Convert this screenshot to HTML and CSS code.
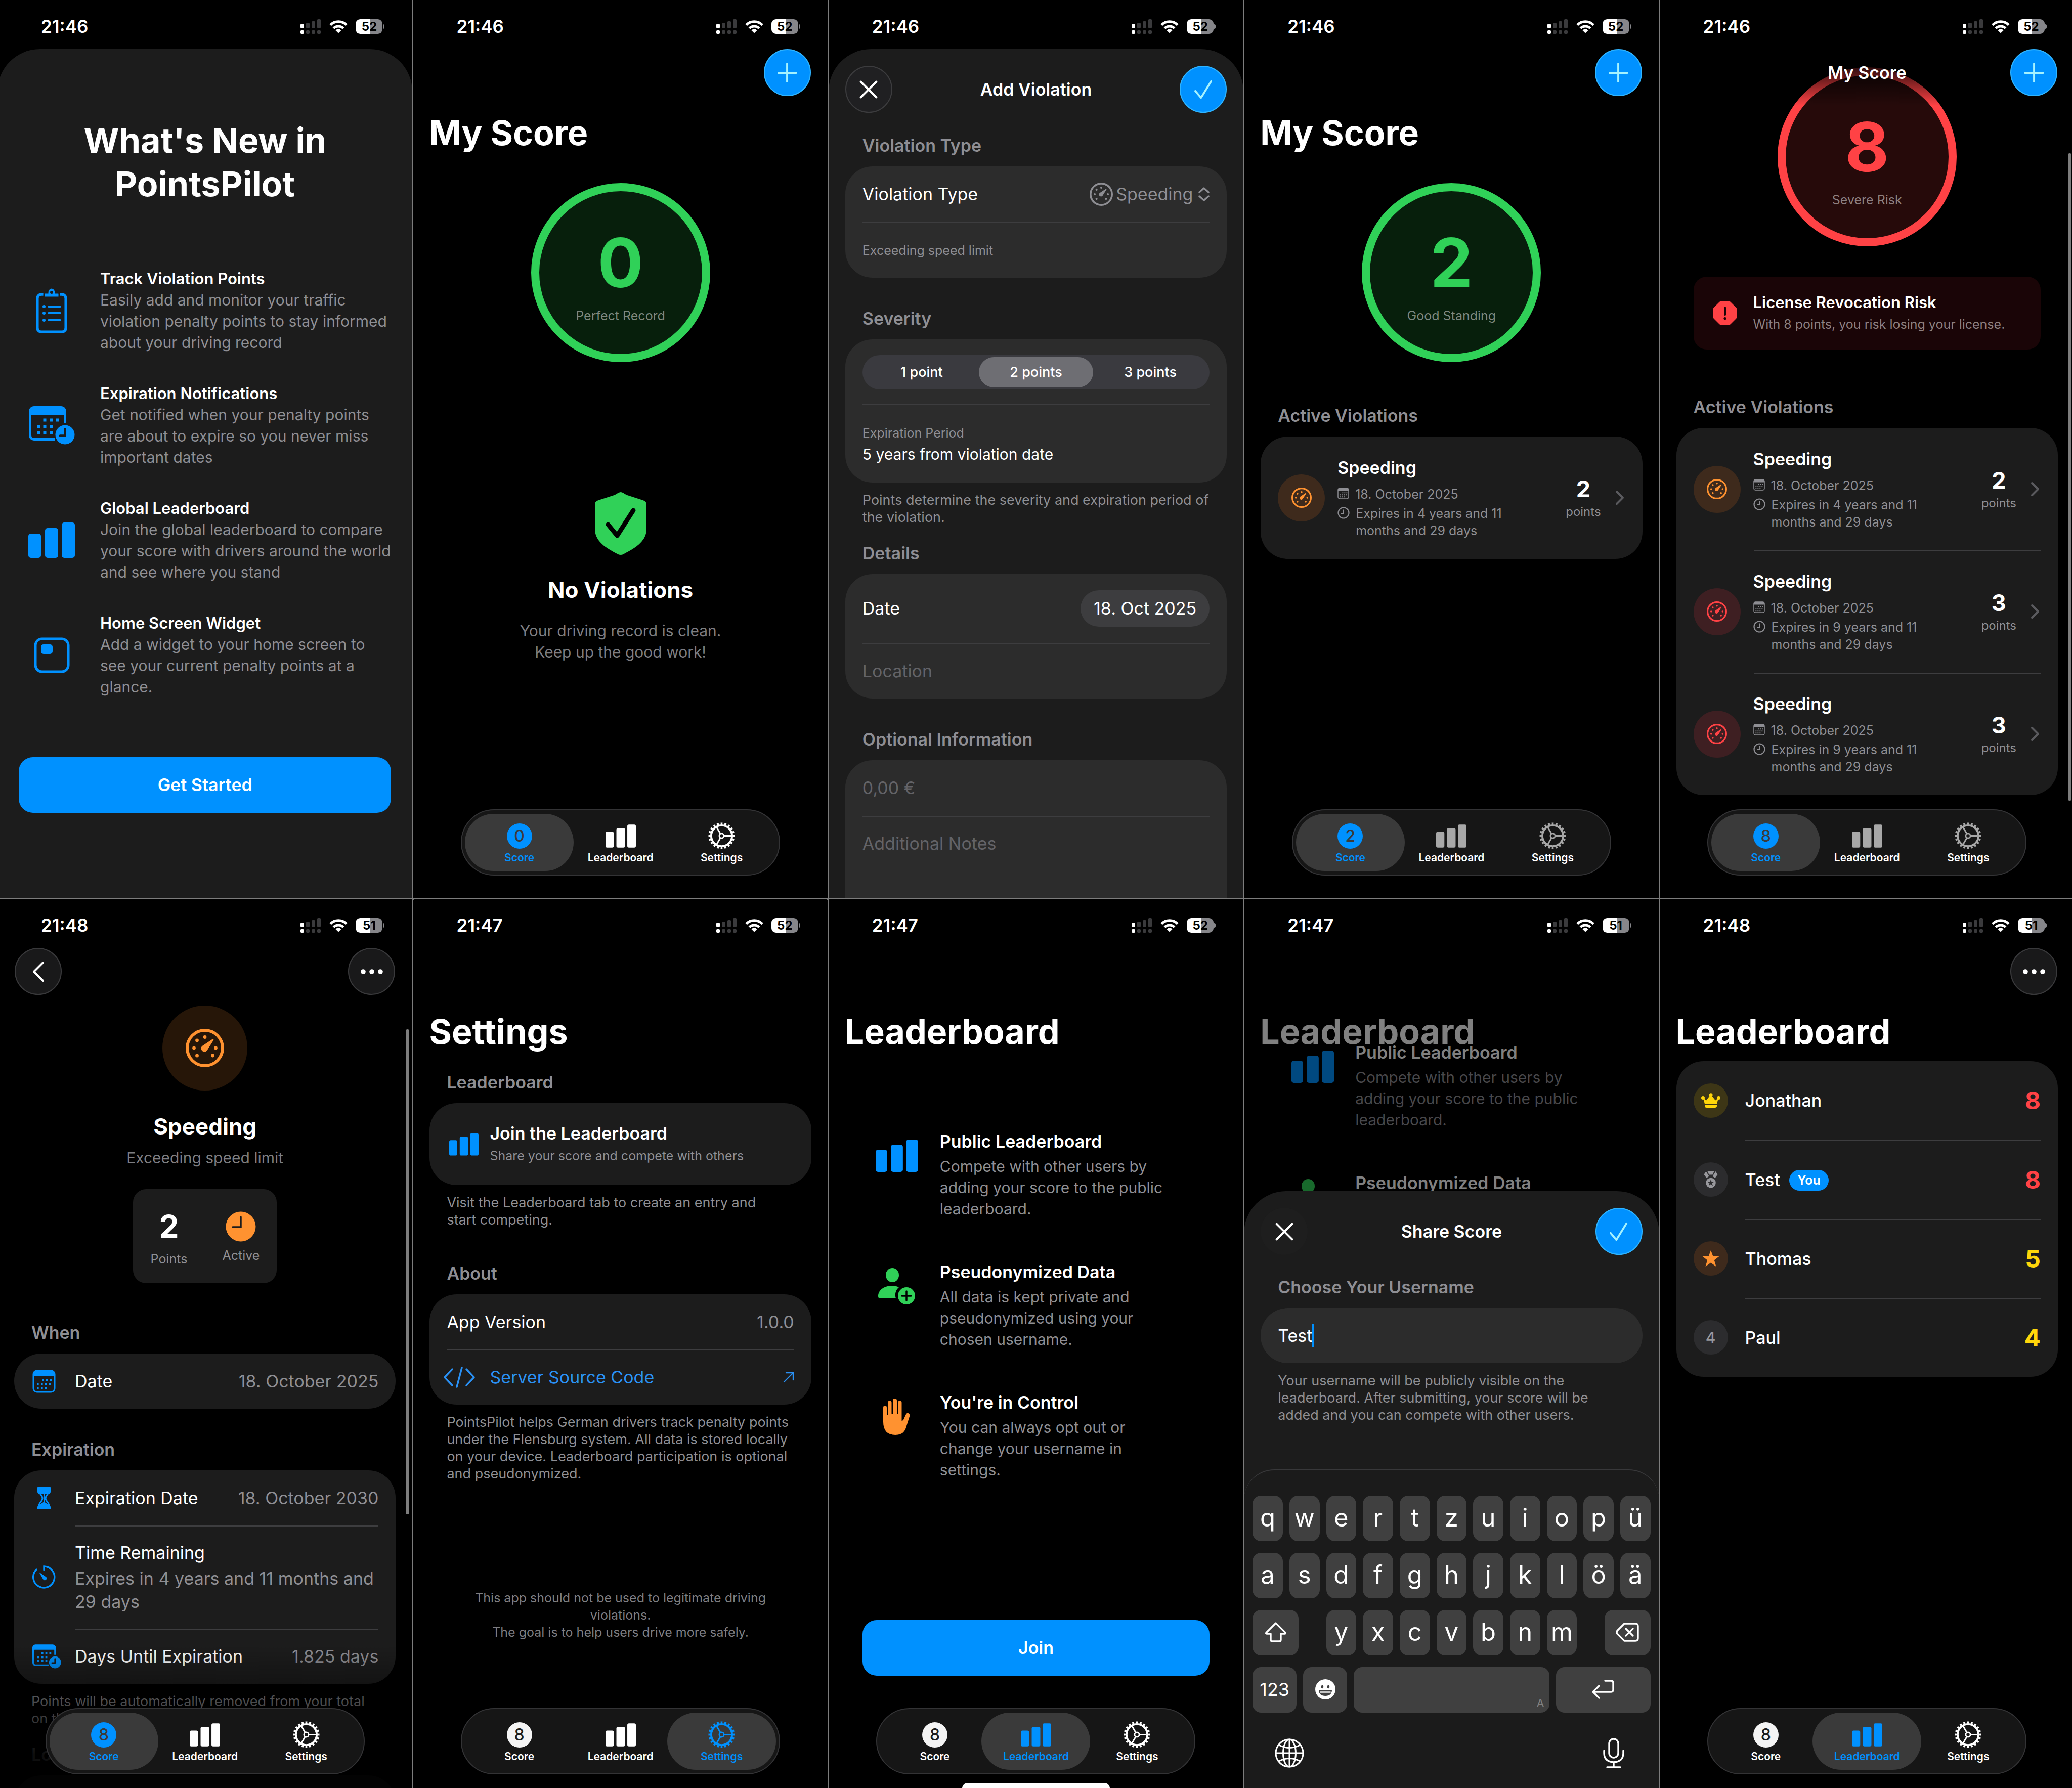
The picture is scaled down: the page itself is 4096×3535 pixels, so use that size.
FILE: index.html
```html
<!DOCTYPE html>
<html lang="en">
<head>
<meta charset="utf-8">
<title>PointsPilot screens</title>
<link rel="stylesheet" href="styles.css">
</head>
<body>
<svg class="sprite" aria-hidden="true">
  <symbol id="i-signal" viewBox="0 0 41 29">
    <g fill="#fff"><rect x="0" y="9" width="7" height="9" rx="2"/><rect x="0" y="22" width="7" height="7" rx="2"/></g>
    <g fill="#3a3a3c"><rect x="11" y="7" width="7" height="11" rx="2"/><rect x="22" y="4" width="7" height="14" rx="2"/><rect x="33" y="0" width="7" height="18" rx="2"/><rect x="11" y="22" width="7" height="7" rx="2"/><rect x="22" y="22" width="7" height="7" rx="2"/><rect x="33" y="22" width="7" height="7" rx="2"/></g>
  </symbol>
  <symbol id="i-wifi" viewBox="0 0 36 27">
    <g fill="none" stroke="#fff" stroke-width="5"><path d="M2 10.5a22.5 22.5 0 0 1 32 0"/><path d="M8.3 17a13.7 13.7 0 0 1 19.4 0"/></g>
    <path fill="#fff" d="M18 26.500l-5.600-5.600a8 8 0 0 1 11.200 0z"/>
  </symbol>
  <symbol id="i-bars" viewBox="0 0 92 70">
    <rect x="0" y="22" width="25" height="48" rx="5"/><rect x="33" y="11" width="26" height="59" rx="5"/><rect x="66" y="0" width="26" height="70" rx="5"/>
  </symbol>
  <symbol id="i-gear" viewBox="0 0 54 54">
    <g fill="none" stroke="currentColor"><circle cx="27" cy="27" r="21" stroke-width="4"/><circle cx="27" cy="27" r="24.500" stroke-width="4" pathLength="40" stroke-dasharray="1 1" stroke-dashoffset=".5"/><circle cx="27" cy="27" r="4.700" stroke-width="2.800"/><path stroke-width="3" d="M32 27h14M24.500 22.700L17 9.700M24.500 31.300L17 44.300"/></g>
  </symbol>
  <symbol id="i-gauge" viewBox="0 0 76 76">
    <circle cx="38" cy="38" r="35" fill="none" stroke="currentColor" stroke-width="6"/>
    <g fill="currentColor"><circle cx="38" cy="16.500" r="3.400"/><circle cx="22.500" cy="23" r="3.400"/><circle cx="16.500" cy="38" r="3.400"/><circle cx="59.500" cy="38" r="3.400"/><circle cx="22.500" cy="53" r="3.400"/><circle cx="53.500" cy="53" r="3.400"/><path d="M53 20.500c1.500-1 3 .5 2 2.200L42.500 42.500a6.500 6.500 0 1 1-9-9z"/></g>
  </symbol>
  <symbol id="i-plus" viewBox="0 0 40 40"><path d="M20 1v38M1 20h38" fill="none" stroke="currentColor" stroke-width="4" stroke-linecap="round"/></symbol>
  <symbol id="i-close" viewBox="0 0 40 40"><path d="M3 3l34 34M37 3L3 37" fill="none" stroke="currentColor" stroke-width="4.500" stroke-linecap="round"/></symbol>
  <symbol id="i-check" viewBox="0 0 40 40"><path d="M3 23l12 14L36 3" fill="none" stroke="currentColor" stroke-width="4" stroke-linecap="round" stroke-linejoin="round"/></symbol>
  <symbol id="i-back" viewBox="0 0 24 40"><path d="M21 2L3 20l18 18" fill="none" stroke="currentColor" stroke-width="4" stroke-linecap="round" stroke-linejoin="round"/></symbol>
  <symbol id="i-more" viewBox="0 0 44 10"><g fill="currentColor"><circle cx="5" cy="5" r="4.800"/><circle cx="22" cy="5" r="4.800"/><circle cx="39" cy="5" r="4.800"/></g></symbol>
  <symbol id="i-chevron" viewBox="0 0 18 30"><path d="M3 3l12 12L3 27" fill="none" stroke="currentColor" stroke-width="4" stroke-linecap="round" stroke-linejoin="round"/></symbol>
  <symbol id="i-updown" viewBox="0 0 22 28"><path d="M2 10l9-8 9 8M2 18l9 8 9-8" fill="none" stroke="currentColor" stroke-width="3.500" stroke-linecap="round" stroke-linejoin="round"/></symbol>
  <symbol id="i-clipboard" viewBox="0 0 62 90">
    <rect x="2.800" y="13" width="56.400" height="74.200" rx="8" fill="none" stroke="currentColor" stroke-width="5.500"/>
    <path fill="currentColor" stroke="#1c1c1c" stroke-width="3" d="M18 10h5c0-5 3-10 8-10s8 5 8 10h5a2 2 0 0 1 2 2v7H16v-7a2 2 0 0 1 2-2z"/><circle cx="31" cy="9" r="3" fill="#1c1c1c"/>
    <g fill="currentColor"><circle cx="16" cy="37" r="3"/><circle cx="16" cy="50" r="3"/><circle cx="16" cy="64" r="3"/></g>
    <path d="M25 37h23M25 50h23M25 64h23" stroke="currentColor" stroke-width="4" stroke-linecap="round"/>
  </symbol>
  <symbol id="i-calendar" viewBox="0 0 46 46">
    <rect x="2" y="2" width="42" height="42" rx="7" fill="none" stroke="currentColor" stroke-width="3"/><path fill="currentColor" d="M2 13V8a6 6 0 0 1 6-6h30a6 6 0 0 1 6 6v5z"/>
    <path d="M19 20.500h20M9 28.500h30M9 36.500h20" stroke="currentColor" stroke-width="3.600" stroke-dasharray="3.600 4.400"/>
  </symbol>
  <symbol id="i-calclock" viewBox="0 0 91 76">
    <path fill="none" stroke="currentColor" stroke-width="5" d="M71.500 33V10a7.500 7.500 0 0 0-7.500-7.500H10A7.500 7.500 0 0 0 2.500 10v48a7.500 7.500 0 0 0 7.500 7.500h41"/><path fill="currentColor" d="M2 21V10a8 8 0 0 1 8-8h54a8 8 0 0 1 8 8v11q0-4-4-4H8q-6 0-6 4z"/>
    <g stroke="currentColor" stroke-width="6" stroke-dasharray="6 6.500"><path d="M28.500 27.500h31.500M16 40h31M16 52h31"/></g>
    <circle cx="71.500" cy="56.500" r="19" fill="currentColor"/><path d="M71.500 45.500v13H62" fill="none" stroke="#1c1c1c" stroke-width="4.500" stroke-linecap="round" stroke-linejoin="round"/>
  </symbol>
  <symbol id="i-widget" viewBox="0 0 71 71"><rect x="3" y="3" width="65" height="65" rx="13" fill="none" stroke="currentColor" stroke-width="5"/><rect x="14" y="14" width="23" height="19" rx="5" fill="currentColor"/></symbol>
  <symbol id="i-clock" viewBox="0 0 24 24"><circle cx="12" cy="12" r="10.500" fill="none" stroke="currentColor" stroke-width="2.200"/><path d="M12 5.500V13H7" fill="none" stroke="currentColor" stroke-width="2"/></symbol>
  <symbol id="i-clockfill" viewBox="0 0 60 60"><circle cx="30" cy="30" r="29.500" fill="currentColor"/><path d="M30 11v20H14" fill="none" stroke="#1c1c1c" stroke-width="3.500" stroke-linecap="round"/></symbol>
  <symbol id="i-shield" viewBox="0 0 102 124"><path fill="currentColor" d="M51 0c4 0 8 4 13 6l31 10c5 2 7 4 7 9v48c0 28-30 41-46 50q-5 2-10 0C30 114 0 101 0 73V25c0-5 2-7 7-9l31-10c5-2 9-6 13-6z"/><path d="M26 64l18 22 32-50" fill="none" stroke="#000" stroke-width="9" stroke-linecap="round" stroke-linejoin="round"/></symbol>
  <symbol id="i-alert" viewBox="0 0 48 48"><path fill="currentColor" d="M17 0h14q2 0 4 2l11 11q2 2 2 4v14q0 2-2 4L35 46q-2 2-4 2H17q-2 0-4-2L2 35q-2-2-2-4V17q0-2 2-4L13 2q2-2 4-2z"/><path d="M24 13v14" stroke="#1a0507" stroke-width="4" stroke-linecap="round"/><circle cx="24" cy="34.500" r="2.600" fill="#1a0507"/></symbol>
  <symbol id="i-hourglass" viewBox="0 0 30 44"><path fill="none" stroke="currentColor" stroke-width="3" d="M4 3c0 11 8 12 8 19S4 30 4 41M26 3c0 11-8 12-8 19s8 8 8 19"/><path fill="currentColor" d="M1 2q0-2 2-2h24q2 0 2 2v3q0 6-4 9H5Q1 11 1 5zM1 42q0 2 2 2h24q2 0 2-2-1-5-5-7l-9-6-9 6q-4 2-5 7zM14 14h2v16h-2z"/></symbol>
  <symbol id="i-timer" viewBox="0 0 46 48"><path fill="none" stroke="currentColor" stroke-width="3.400" stroke-linecap="round" d="M23 10V3a21 21 0 1 1-15 6"/><path fill="currentColor" d="M13 14l13 9a3.800 3.800 0 1 1-5 5z"/></symbol>
  <symbol id="i-code" viewBox="0 0 62 42"><path fill="none" stroke="currentColor" stroke-width="3.500" stroke-linecap="round" stroke-linejoin="round" d="M17 5L2 21l15 16M45 5l15 16-15 16M36 2L26 40"/></symbol>
  <symbol id="i-arrow" viewBox="0 0 22 22"><path fill="none" stroke="currentColor" stroke-width="2.400" stroke-linecap="round" stroke-linejoin="round" d="M2 20L20 2M6 2h14v14"/></symbol>
  <symbol id="i-person" viewBox="0 0 74 72"><g fill="currentColor"><ellipse cx="28" cy="14" rx="13" ry="14"/><path d="M0 56c0-13 12-21 28-21 5 0 9 1 13 3a20 20 0 0 0-6 22H4q-4 0-4-4z"/><circle cx="56" cy="55" r="17"/></g><path d="M56 46v18M47 55h18" stroke="#000" stroke-width="3.500" stroke-linecap="round"/></symbol>
  <symbol id="i-hand" viewBox="0 0 54 72"><path fill="currentColor" d="M0 18q0-4 3.500-4T7 18v15h2.500V8q0-4 3.500-4t3.500 4v23H19V4q0-4 4-4t4 4v27h2.500V8q0-4 3.500-4t3.500 4v36l3-1 5-11q2-4 5-3t3 5l-8 25Q40 72 24 72 0 72 0 46z"/></symbol>
  <symbol id="i-crown" viewBox="0 0 38 30"><g fill="currentColor"><path d="M4 10l6 4.500 7-9h4l7 9 6-4.500-3 11.500H7z"/><circle cx="3.500" cy="9.500" r="3.500"/><circle cx="19" cy="3.800" r="3.600"/><circle cx="34.500" cy="9.500" r="3.500"/><path d="M7 23.500h24v2q0 3.500-4 3.500H11q-4 0-4-3.500z"/></g></symbol>
  <symbol id="i-medal" viewBox="0 0 28 34"><g fill="currentColor"><path d="M7 0h14l-3.500 7.500h-7zM4.500 1L.5 7l5 7 5-3.500zM23.500 1l4 6-5 7-5-3.500z"/><circle cx="14" cy="23.500" r="9.800"/></g><path fill="#2c2c2e" d="M14 17l1.600 4.600h4.800l-3.900 2.900 1.500 4.700-4-2.900-4 2.900 1.500-4.700-3.900-2.900h4.800z"/></symbol>
  <symbol id="i-star" viewBox="0 0 34 32"><path fill="currentColor" d="M17 0l4.300 11.500H34l-10.200 8L27.500 32 17 24.500 6.500 32l3.700-12.500L0 11.500h12.700z"/></symbol>
  <symbol id="i-shift" viewBox="0 0 44 40"><path fill="none" stroke="currentColor" stroke-width="3.400" stroke-linejoin="round" d="M22 2L3 21q-1 2 1 2h8v12q0 3 3 3h14q3 0 3-3V23h8q2 0 1-2z"/></symbol>
  <symbol id="i-delete" viewBox="0 0 46 38"><g fill="none" stroke="currentColor" stroke-width="3.400" stroke-linecap="round" stroke-linejoin="round"><path d="M17 2h22q5 0 5 5v24q0 5-5 5H17L3 22q-2-3 0-6z"/><path d="M20 12l14 14M34 12L20 26"/></g></symbol>
  <symbol id="i-return" viewBox="0 0 44 38"><path fill="none" stroke="currentColor" stroke-width="3.400" stroke-linecap="round" stroke-linejoin="round" d="M26 2h12q4 0 4 4v14q0 4-4 4H3M14 12L2 24l12 12"/></symbol>
  <symbol id="i-emoji" viewBox="0 0 40 40"><circle cx="20" cy="20" r="20" fill="currentColor"/><g fill="#404040"><ellipse cx="14" cy="15" rx="2.200" ry="3.200"/><ellipse cx="26" cy="15" rx="2.200" ry="3.200"/><path d="M7 22h26q-1 11-13 11T7 22z"/></g><path d="M9.500 25.500h21" stroke="#fff" stroke-width="2.400"/></symbol>
  <symbol id="i-globe" viewBox="0 0 58 58"><g fill="none" stroke="currentColor" stroke-width="3"><circle cx="29" cy="29" r="27"/><ellipse cx="29" cy="29" rx="12.500" ry="27"/><path d="M29 2v54M2 29h54M8 13q21 11 42 0M8 45q21-11 42 0"/></g></symbol>
  <symbol id="i-mic" viewBox="0 0 42 60"><g fill="none" stroke="currentColor" stroke-width="3.400" stroke-linecap="round"><rect x="12" y="2" width="18" height="37" rx="9"/><path d="M2 25v5q0 17 19 18 19-1 19-18v-5M21 48v9M8 58h26"/></g></symbol>
</svg>

<main class="board">

  <!-- 1: What's new -->
  <section class="phone">
    <header class="status"><time>21:46</time><span class="status-icons"><svg class="signal"><use href="#i-signal"/></svg><svg class="wifi"><use href="#i-wifi"/></svg><span class="battery">52</span></span></header>
    <div class="sheet welcome">
      <h1>What's New in<br>PointsPilot</h1>
      <ul class="news">
        <li><span class="news-icon"><svg width="62" height="90"><use href="#i-clipboard"/></svg></span><div><h2>Track Violation Points</h2><p>Easily add and monitor your traffic<br>violation penalty points to stay informed<br>about your driving record</p></div></li>
        <li><span class="news-icon"><svg width="91" height="76"><use href="#i-calclock"/></svg></span><div><h2>Expiration Notifications</h2><p>Get notified when your penalty points<br>are about to expire so you never miss<br>important dates</p></div></li>
        <li><span class="news-icon"><svg width="92" height="70"><use href="#i-bars"/></svg></span><div><h2>Global Leaderboard</h2><p>Join the global leaderboard to compare<br>your score with drivers around the world<br>and see where you stand</p></div></li>
        <li><span class="news-icon"><svg width="71" height="71"><use href="#i-widget"/></svg></span><div><h2>Home Screen Widget</h2><p>Add a widget to your home screen to<br>see your current penalty points at a<br>glance.</p></div></li>
      </ul>
      <button class="primary">Get Started</button>
    </div>
  </section>

  <!-- 2: Empty score -->
  <section class="phone">
    <header class="status"><time>21:46</time><span class="status-icons"><svg class="signal"><use href="#i-signal"/></svg><svg class="wifi"><use href="#i-wifi"/></svg><span class="battery">52</span></span></header>
    <div class="toolbar"><span></span><button class="round blue" aria-label="Add"><svg width="38" height="38"><use href="#i-plus"/></svg></button></div>
    <h1 class="page-title">My Score</h1>
    <div class="ring"><strong>0</strong><span>Perfect Record</span></div>
    <div class="empty">
      <svg width="102" height="124"><use href="#i-shield"/></svg>
      <h2>No Violations</h2>
      <p>Your driving record is clean.<br>Keep up the good work!</p>
    </div>
    <nav class="tabs">
      <a href="#score" class="on"><span class="badge">0</span>Score</a>
      <a href="#leaderboard"><svg width="60" height="46"><use href="#i-bars"/></svg>Leaderboard</a>
      <a href="#settings"><svg width="53" height="53"><use href="#i-gear"/></svg>Settings</a>
    </nav>
  </section>

  <!-- 3: Add violation -->
  <section class="phone">
    <header class="status"><time>21:46</time><span class="status-icons"><svg class="signal"><use href="#i-signal"/></svg><svg class="wifi"><use href="#i-wifi"/></svg><span class="battery">52</span></span></header>
    <form class="sheet form">
      <div class="sheet-bar"><button type="button" class="round" aria-label="Close"><svg width="36" height="36"><use href="#i-close"/></svg></button><h2>Add Violation</h2><button type="button" class="round blue" aria-label="Save"><svg width="38" height="38"><use href="#i-check"/></svg></button></div>
      <section class="group">
        <h3>Violation Type</h3>
        <div class="card">
          <div class="row"><label for="type">Violation Type</label><span class="picker"><svg width="46" height="46"><use href="#i-gauge"/></svg><select id="type"><option>Speeding</option></select><svg width="22" height="28"><use href="#i-updown"/></svg></span></div>
          <div class="row small">Exceeding speed limit</div>
        </div>
      </section>
      <section class="group">
        <h3>Severity</h3>
        <div class="card">
          <div class="segment-row"><div class="segment">
            <label><input type="radio" name="points">1 point</label>
            <label><input type="radio" name="points" checked>2 points</label>
            <label><input type="radio" name="points">3 points</label>
          </div></div>
          <div class="period"><span>Expiration Period</span><p>5 years from violation date</p></div>
        </div>
        <p class="note">Points determine the severity and expiration period of<br>the violation.</p>
      </section>
      <section class="group tight">
        <h3>Details</h3>
        <div class="card">
          <div class="row tall"><span>Date</span><button type="button" class="date">18. Oct 2025</button></div>
          <div class="row"><input aria-label="Location" placeholder="Location"></div>
        </div>
      </section>
      <section class="group">
        <h3>Optional Information</h3>
        <div class="card">
          <div class="row"><input aria-label="Fine" placeholder="0,00 €"></div>
          <div class="row notes"><textarea aria-label="Additional Notes" placeholder="Additional Notes"></textarea></div>
        </div>
      </section>
    </form>
  </section>

  <!-- 4: One violation -->
  <section class="phone">
    <header class="status"><time>21:46</time><span class="status-icons"><svg class="signal"><use href="#i-signal"/></svg><svg class="wifi"><use href="#i-wifi"/></svg><span class="battery">52</span></span></header>
    <div class="toolbar"><span></span><button class="round blue" aria-label="Add"><svg width="38" height="38"><use href="#i-plus"/></svg></button></div>
    <h1 class="page-title">My Score</h1>
    <div class="ring"><strong>2</strong><span>Good Standing</span></div>
    <section class="group violations">
      <h3>Active Violations</h3>
      <div class="card">
        <a href="#v1" class="violation"><span class="dot orange"><svg width="40" height="40"><use href="#i-gauge"/></svg></span><div class="violation-body"><h4>Speeding</h4><p><svg width="23" height="23"><use href="#i-calendar"/></svg>18. October 2025</p><p><svg width="24" height="24"><use href="#i-clock"/></svg>Expires in 4 years and 11<br>months and 29 days</p></div><div class="count"><strong>2</strong>points</div><svg class="chevron"><use href="#i-chevron"/></svg></a>
      </div>
    </section>
    <nav class="tabs dim">
      <a href="#score" class="on"><span class="badge">2</span>Score</a>
      <a href="#leaderboard"><svg width="60" height="46"><use href="#i-bars"/></svg>Leaderboard</a>
      <a href="#settings"><svg width="53" height="53"><use href="#i-gear"/></svg>Settings</a>
    </nav>
  </section>

  <!-- 5: Severe risk -->
  <section class="phone">
    <header class="status"><time>21:46</time><span class="status-icons"><svg class="signal"><use href="#i-signal"/></svg><svg class="wifi"><use href="#i-wifi"/></svg><span class="battery">52</span></span></header>
    <div class="toolbar over"><h2>My Score</h2><button class="round blue" aria-label="Add"><svg width="38" height="38"><use href="#i-plus"/></svg></button></div>
    <div class="ring red"><strong>8</strong><span>Severe Risk</span></div>
    <div class="alert"><svg width="48" height="48"><use href="#i-alert"/></svg><div><h3>License Revocation Risk</h3><p>With 8 points, you risk losing your license.</p></div></div>
    <section class="group after-alert">
      <h3>Active Violations</h3>
      <div class="card">
        <a href="#v1" class="violation"><span class="dot orange"><svg width="40" height="40"><use href="#i-gauge"/></svg></span><div class="violation-body"><h4>Speeding</h4><p><svg width="23" height="23"><use href="#i-calendar"/></svg>18. October 2025</p><p><svg width="24" height="24"><use href="#i-clock"/></svg>Expires in 4 years and 11<br>months and 29 days</p></div><div class="count"><strong>2</strong>points</div><svg class="chevron"><use href="#i-chevron"/></svg></a>
        <a href="#v2" class="violation"><span class="dot red"><svg width="40" height="40"><use href="#i-gauge"/></svg></span><div class="violation-body"><h4>Speeding</h4><p><svg width="23" height="23"><use href="#i-calendar"/></svg>18. October 2025</p><p><svg width="24" height="24"><use href="#i-clock"/></svg>Expires in 9 years and 11<br>months and 29 days</p></div><div class="count"><strong>3</strong>points</div><svg class="chevron"><use href="#i-chevron"/></svg></a>
        <a href="#v3" class="violation"><span class="dot red"><svg width="40" height="40"><use href="#i-gauge"/></svg></span><div class="violation-body"><h4>Speeding</h4><p><svg width="23" height="23"><use href="#i-calendar"/></svg>18. October 2025</p><p><svg width="24" height="24"><use href="#i-clock"/></svg>Expires in 9 years and 11<br>months and 29 days</p></div><div class="count"><strong>3</strong>points</div><svg class="chevron"><use href="#i-chevron"/></svg></a>
      </div>
    </section>
    <i class="scrollbar long"></i>
    <nav class="tabs dim">
      <a href="#score" class="on"><span class="badge">8</span>Score</a>
      <a href="#leaderboard"><svg width="60" height="46"><use href="#i-bars"/></svg>Leaderboard</a>
      <a href="#settings"><svg width="53" height="53"><use href="#i-gear"/></svg>Settings</a>
    </nav>
  </section>

  <!-- 6: Violation detail -->
  <section class="phone">
    <header class="status"><time>21:48</time><span class="status-icons"><svg class="signal"><use href="#i-signal"/></svg><svg class="wifi"><use href="#i-wifi"/></svg><span class="battery">51</span></span></header>
    <div class="toolbar"><button class="round" aria-label="Back"><svg width="24" height="40"><use href="#i-back"/></svg></button><button class="round" aria-label="More"><svg width="44" height="10"><use href="#i-more"/></svg></button></div>
    <div class="hero">
      <span class="hero-icon"><svg width="76" height="76"><use href="#i-gauge"/></svg></span>
      <h2>Speeding</h2>
      <p>Exceeding speed limit</p>
      <div class="facts"><div><strong>2</strong>Points</div><div class="active"><svg width="60" height="60"><use href="#i-clockfill"/></svg>Active</div></div>
    </div>
    <section class="group when">
      <h3>When</h3>
      <div class="card"><div class="row icon-row single"><svg width="46" height="46"><use href="#i-calendar"/></svg><span>Date</span><span class="value">18. October 2025</span></div></div>
    </section>
    <section class="group">
      <h3>Expiration</h3>
      <div class="card">
        <div class="row icon-row"><svg width="46" height="44"><use href="#i-hourglass"/></svg><span>Expiration Date</span><span class="value">18. October 2030</span></div>
        <div class="row icon-row remaining"><svg width="46" height="48"><use href="#i-timer"/></svg><div>Time Remaining<p>Expires in 4 years and 11 months and<br>29 days</p></div></div>
        <div class="row icon-row until"><svg width="57" height="48"><use href="#i-calclock"/></svg><span>Days Until Expiration</span><span class="value">1.825 days</span></div>
      </div>
      <p class="note">Points will be automatically removed from your total<br>on this date.</p>
    </section>
    <section class="group tight"><h3>Location</h3><div class="card"><div class="row single"></div></div></section>
    <div class="fade"></div>
    <i class="scrollbar short"></i>
    <nav class="tabs">
      <a href="#score" class="on"><span class="badge">8</span>Score</a>
      <a href="#leaderboard"><svg width="60" height="46"><use href="#i-bars"/></svg>Leaderboard</a>
      <a href="#settings"><svg width="53" height="53"><use href="#i-gear"/></svg>Settings</a>
    </nav>
  </section>

  <!-- 7: Settings -->
  <section class="phone rounded">
    <header class="status"><time>21:47</time><span class="status-icons"><svg class="signal"><use href="#i-signal"/></svg><svg class="wifi"><use href="#i-wifi"/></svg><span class="battery">52</span></span></header>
    <div class="toolbar"></div>
    <h1 class="page-title">Settings</h1>
    <section class="group first">
      <h3>Leaderboard</h3>
      <div class="card"><div class="row icon-row join"><svg width="58" height="45"><use href="#i-bars"/></svg><div><h4>Join the Leaderboard</h4><p>Share your score and compete with others</p></div></div></div>
      <p class="note">Visit the Leaderboard tab to create an entry and<br>start competing.</p>
    </section>
    <section class="group about">
      <h3>About</h3>
      <div class="card">
        <div class="row"><span>App Version</span><span class="value">1.0.0</span></div>
        <a href="#source" class="row icon-row source"><svg width="62" height="42"><use href="#i-code"/></svg><span>Server Source Code</span><svg width="22" height="22"><use href="#i-arrow"/></svg></a>
      </div>
      <p class="note">PointsPilot helps German drivers track penalty points<br>under the Flensburg system. All data is stored locally<br>on your device. Leaderboard participation is optional<br>and pseudonymized.</p>
    </section>
    <p class="disclaimer">This app should not be used to legitimate driving<br>violations.<br>The goal is to help users drive more safely.</p>
    <nav class="tabs">
      <a href="#score"><span class="badge">8</span>Score</a>
      <a href="#leaderboard"><svg width="60" height="46"><use href="#i-bars"/></svg>Leaderboard</a>
      <a href="#settings" class="on"><svg width="53" height="53"><use href="#i-gear"/></svg>Settings</a>
    </nav>
  </section>

  <!-- 8: Leaderboard intro -->
  <section class="phone">
    <header class="status"><time>21:47</time><span class="status-icons"><svg class="signal"><use href="#i-signal"/></svg><svg class="wifi"><use href="#i-wifi"/></svg><span class="battery">52</span></span></header>
    <div class="toolbar"></div>
    <h1 class="page-title">Leaderboard</h1>
    <ul class="intro">
      <li><span><svg class="c-blue" width="84" height="64"><use href="#i-bars"/></svg></span><div><h2>Public Leaderboard</h2><p>Compete with other users by<br>adding your score to the public<br>leaderboard.</p></div></li>
      <li><span><svg class="c-green" width="74" height="72"><use href="#i-person"/></svg></span><div><h2>Pseudonymized Data</h2><p>All data is kept private and<br>pseudonymized using your<br>chosen username.</p></div></li>
      <li><span><svg class="c-orange" width="54" height="72"><use href="#i-hand"/></svg></span><div><h2>You're in Control</h2><p>You can always opt out or<br>change your username in<br>settings.</p></div></li>
    </ul>
    <button class="primary inset">Join</button>
    <nav class="tabs">
      <a href="#score"><span class="badge">8</span>Score</a>
      <a href="#leaderboard" class="on"><svg width="60" height="46"><use href="#i-bars"/></svg>Leaderboard</a>
      <a href="#settings"><svg width="53" height="53"><use href="#i-gear"/></svg>Settings</a>
    </nav>
    <i class="home"></i>
  </section>

  <!-- 9: Share score -->
  <section class="phone">
    <header class="status"><time>21:47</time><span class="status-icons"><svg class="signal"><use href="#i-signal"/></svg><svg class="wifi"><use href="#i-wifi"/></svg><span class="battery">51</span></span></header>
    <div class="behind">
      <div class="toolbar"></div>
      <h1 class="page-title">Leaderboard</h1>
      <ul class="intro">
        <li><span><svg class="c-blue" width="84" height="64"><use href="#i-bars"/></svg></span><div><h2>Public Leaderboard</h2><p>Compete with other users by<br>adding your score to the public<br>leaderboard.</p></div></li>
        <li><span><svg class="c-green" width="74" height="72"><use href="#i-person"/></svg></span><div><h2>Pseudonymized Data</h2></div></li>
      </ul>
    </div>
    <form class="sheet share">
      <div class="sheet-bar"><button type="button" class="round plain" aria-label="Close"><svg width="36" height="36"><use href="#i-close"/></svg></button><h2>Share Score</h2><button type="button" class="round blue" aria-label="Save"><svg width="38" height="38"><use href="#i-check"/></svg></button></div>
      <section class="group">
        <h3><label for="username">Choose Your Username</label></h3>
        <div class="card"><div class="row single username"><input id="username" value="Test"><i class="caret"></i></div></div>
        <p class="note">Your username will be publicly visible on the<br>leaderboard. After submitting, your score will be<br>added and you can compete with other users.</p>
      </section>
      <div class="keyboard">
        <div class="keys"><button type="button">q</button><button type="button">w</button><button type="button">e</button><button type="button">r</button><button type="button">t</button><button type="button">z</button><button type="button">u</button><button type="button">i</button><button type="button">o</button><button type="button">p</button><button type="button">ü</button></div>
        <div class="keys"><button type="button">a</button><button type="button">s</button><button type="button">d</button><button type="button">f</button><button type="button">g</button><button type="button">h</button><button type="button">j</button><button type="button">k</button><button type="button">l</button><button type="button">ö</button><button type="button">ä</button></div>
        <div class="keys"><button type="button" class="wide left" aria-label="Shift"><svg width="44" height="40"><use href="#i-shift"/></svg></button><button type="button">y</button><button type="button">x</button><button type="button">c</button><button type="button">v</button><button type="button">b</button><button type="button">n</button><button type="button">m</button><button type="button" class="wide right" aria-label="Delete"><svg width="46" height="38"><use href="#i-delete"/></svg></button></div>
        <div class="keys bottom"><button type="button" class="num">123</button><button type="button" aria-label="Emoji"><svg width="40" height="40"><use href="#i-emoji"/></svg></button><button type="button" class="space" aria-label="Space">A</button><button type="button" aria-label="Return"><svg width="44" height="38"><use href="#i-return"/></svg></button></div>
        <div class="key-foot"><svg width="58" height="58"><use href="#i-globe"/></svg><svg width="42" height="60"><use href="#i-mic"/></svg></div>
      </div>
    </form>
  </section>

  <!-- 10: Leaderboard -->
  <section class="phone">
    <header class="status"><time>21:48</time><span class="status-icons"><svg class="signal"><use href="#i-signal"/></svg><svg class="wifi"><use href="#i-wifi"/></svg><span class="battery">51</span></span></header>
    <div class="toolbar"><span></span><button class="round" aria-label="More"><svg width="44" height="10"><use href="#i-more"/></svg></button></div>
    <h1 class="page-title">Leaderboard</h1>
    <ol class="card ranks">
      <li><span class="dot gold"><svg width="38" height="30"><use href="#i-crown"/></svg></span><div>Jonathan<strong class="bad">8</strong></div></li>
      <li><span class="dot silver"><svg width="28" height="34"><use href="#i-medal"/></svg></span><div>Test<em>You</em><strong class="bad">8</strong></div></li>
      <li><span class="dot orange"><svg width="34" height="32"><use href="#i-star"/></svg></span><div>Thomas<strong>5</strong></div></li>
      <li><span class="dot silver">4</span><div>Paul<strong>4</strong></div></li>
    </ol>
    <nav class="tabs">
      <a href="#score"><span class="badge">8</span>Score</a>
      <a href="#leaderboard" class="on"><svg width="60" height="46"><use href="#i-bars"/></svg>Leaderboard</a>
      <a href="#settings"><svg width="53" height="53"><use href="#i-gear"/></svg>Settings</a>
    </nav>
  </section>
</main>
</body>
</html>
```
FILE: styles.css
```css
:root {
  --blue: #0091ff;
  --green: #30d158;
  --orange: #ff9230;
  --red: #ff4245;
  --yellow: #ffd60a;
  --gray: #8e8e93;
  --surface: #1c1c1c;
  --raised: #2c2c2c;
  --line: #3d3d3f;
  --card: var(--surface);
}

* { box-sizing: border-box; }

body {
  margin: 0;
  overflow: hidden;
  background: #000;
  color: #fff;
  font: 400 34px/46px Inter, "Liberation Sans", sans-serif;
}

h1, h2, h3, h4, p, ul, ol { margin: 0; padding: 0; font: inherit; }
ul, ol { list-style: none; }
a { color: inherit; text-decoration: none; }
button, input, select, textarea { font: inherit; color: inherit; border: 0; padding: 0; margin: 0; background: none; outline: 0; }
svg { display: block; flex: none; fill: currentColor; }
.sprite { position: absolute; width: 0; height: 0; }

/* Contact sheet of ten screens, bleeding slightly over the window edges */
.board {
  display: grid;
  grid-template-columns: repeat(5, minmax(0, 1fr));
  grid-template-rows: repeat(2, minmax(0, 1fr));
  gap: 1px;
  height: calc(100vh + 18px);
  margin: 0 -5px;
  background: #7c7c7c;
}

.phone { position: relative; display: flex; flex-direction: column; overflow: hidden; background: #000; }
.phone.rounded { border-radius: 6px 6px 0 0; }

/* Status bar */
.status { display: flex; flex: none; justify-content: space-between; align-items: center; height: 97px; padding: 7px 55px 0 86px; }
.status time { font-weight: 600; font-size: 35px; }
.status-icons { display: flex; align-items: center; gap: 16px; }
.signal { width: 41px; height: 29px; }
.wifi { width: 36px; height: 27px; }
.battery { position: relative; width: 53px; height: 29px; border-radius: 9px; background: linear-gradient(90deg, #fff 52%, #86868a 52%); color: #000; font-size: 24px; font-weight: 700; line-height: 29px; text-align: center; margin-right: 4px; }
.battery::after { content: ""; position: absolute; right: -4px; top: 10px; width: 3px; height: 9px; border-radius: 0 3px 3px 0; background: #86868a; }

/* Buttons */
.round { display: grid; place-items: center; flex: none; width: 93px; height: 93px; border-radius: 50%; background: #19191a; border: 2px solid #39393b; }
.round.blue { background: var(--blue); border-color: #2fb4ff; color: #a5f2ff; }
.round.plain { border-color: transparent; background: #1e1e1e; }
.primary { flex: none; height: 110px; border-radius: 28px; background: var(--blue); font-weight: 600; }

.toolbar { display: flex; flex: none; justify-content: space-between; align-items: center; height: 93px; padding: 0 34px; }
.toolbar.over { position: relative; z-index: 2; justify-content: flex-end; }
.toolbar.over h2 { position: absolute; left: 0; right: 0; text-align: center; font-weight: 600; }
.page-title { flex: none; margin: 30px 32px 0; font-weight: 700; font-size: 68px; line-height: 84px; }

/* Score ring */
.ring { position: relative; flex: none; display: flex; flex-direction: column; align-items: center; align-self: center; width: 354px; height: 354px; margin-top: 58px; padding-top: 71px; border: 16px solid var(--green); border-radius: 50%; background: #071f0c; color: var(--green); }
.ring strong { font-size: 134px; line-height: 140px; font-weight: 700; }
.ring span { margin-top: 18px; font-size: 25px; line-height: 34px; color: #7d877f; }
.ring.red { margin-top: -57px; border-color: var(--red); background: #260a0a; color: var(--red); }
.ring.red span { color: #8c7f80; }
.ring.red::after { content: ""; position: absolute; left: -16px; right: -16px; top: -16px; height: 76px; background: linear-gradient(#000000d0, #00000000); }

.empty { display: flex; flex-direction: column; align-items: center; margin-top: 257px; color: var(--green); text-align: center; }
.empty h2 { margin-top: 42px; color: #fff; font-size: 44px; line-height: 54px; font-weight: 700; }
.empty p { margin-top: 33px; color: #7d7d81; font-size: 30px; line-height: 42px; }

/* Tab bar */
.tabs { position: absolute; left: 0; right: 0; bottom: 45px; display: flex; width: 631px; margin: 0 auto; padding: 7px 6px; border: 2px solid #333335; border-radius: 66px; background: #161616; }
.tabs a { display: flex; flex: 0 0 215px; flex-direction: column; align-items: center; justify-content: space-between; height: 113px; padding: 13px 0; border-radius: 57px; font-size: 21px; line-height: 26px; font-weight: 600; }
.tabs a + a { margin-left: -15px; }
.tabs a.on { background: #3a3a3a; color: var(--blue); }
.tabs svg { margin: auto 0; }
.badge { display: grid; place-items: center; width: 50px; height: 50px; margin: auto 0; border-radius: 50%; background: #f4f4f4; color: #1c1c1c; font-size: 32px; font-weight: 500; }
.on .badge { background: var(--blue); color: #3a3a3a; }
.tabs.dim a:not(.on) svg { color: #a8a8a8; }

/* Sheets */
.sheet { flex: 1; display: flex; flex-direction: column; border-radius: 84px 84px 0 0; background: var(--surface); --card: var(--raised); }
.sheet-bar { display: flex; justify-content: space-between; align-items: center; padding: 33px 33px 0; }
.sheet-bar h2 { font-weight: 600; }
.sheet .round:not(.blue):not(.plain) { background: #202022; border-color: #3c3c3e; }

.welcome { padding: 137px 42px 0; }
.welcome h1 { text-align: center; font-size: 68px; line-height: 86px; font-weight: 700; }
.news { display: grid; gap: 59px; margin: 124px 0 118px 5px; }
.news li { display: flex; align-items: center; gap: 36px; font-size: 30px; line-height: 42px; white-space: nowrap; }
.news-icon { display: grid; place-items: center; width: 120px; color: var(--blue); }
.news h2 { font-size: 31px; font-weight: 600; }
.news p { color: var(--gray); }

/* Grouped lists */
.group { flex: none; padding: 58px 33px 0; }
.group.tight { padding-top: 31px; }
.group h3 { margin: 0 0 18px 34px; color: var(--gray); font-weight: 600; }
.form .group:nth-child(2) { padding-top: 42px; }
.card { border-radius: 54px; background: var(--card); overflow: hidden; }
.row { position: relative; display: flex; align-items: center; justify-content: space-between; min-height: 109px; margin: 0 34px; }
.form .row { min-height: 110px; }
.row + .row, .period { border-top: 2px solid var(--line); }
.row.small { font-size: 25px; color: var(--gray); }
.form .row.tall { min-height: 136px; }
.row input, .row textarea { width: 100%; }
.form .row.notes { align-items: flex-start; min-height: 320px; padding-top: 30px; }
.row textarea { height: 240px; resize: none; }
::placeholder { color: #636367; opacity: 1; }
.value { color: var(--gray); }
.picker { display: flex; align-items: center; gap: 6px; color: var(--gray); }
.picker select { appearance: none; }
.picker svg:last-child { margin-left: 4px; }
.date { height: 72px; padding: 0 26px; border-radius: 36px; background: #3d3d3f; }
.note { margin: 18px 34px 0; color: var(--gray); font-size: 27px; line-height: 34px; white-space: nowrap; }

.segment-row { padding: 31px 34px 28px; }
.segment { display: grid; grid-template-columns: repeat(3, 1fr); padding: 4px; border-radius: 34px; background: #3a3a3f; }
.segment label { display: grid; place-items: center; height: 60px; border-radius: 30px; font-size: 27px; font-weight: 500; }
.segment label:has(:checked) { background: #6e6e73; }
.segment input { appearance: none; position: absolute; }
.period { margin: 0 34px; padding: 36px 0 34px; font-size: 30px; line-height: 44px; }
.period span { display: block; font-size: 25px; line-height: 40px; color: var(--gray); }

/* Violations */
.group.violations { padding-top: 83px; }
.violation { position: relative; display: flex; align-items: center; height: 242px; padding: 0 36px 0 34px; }
.violation + .violation::before { content: ""; position: absolute; left: 153px; right: 34px; top: 0; height: 2px; background: var(--line); }
.dot { display: grid; place-items: center; flex: none; width: 93px; height: 93px; border-radius: 50%; }
.dot.orange { background: #3e2a1c; color: var(--orange); }
.dot.red { background: #3e1f22; color: var(--red); }
.dot.gold { background: #3d3616; color: var(--yellow); }
.dot.silver { background: #2c2c2e; color: #98989d; }
.violation-body { flex: 1; margin-left: 25px; color: var(--gray); font-size: 25px; line-height: 34px; white-space: nowrap; }
.violation-body h4 { margin-bottom: 12px; color: #fff; font-size: 34px; line-height: 46px; font-weight: 600; }
.violation-body p { display: flex; gap: 12px; }
.violation-body p + p { margin-top: 4px; }
.violation-body svg { margin-top: 4px; }
.count { color: var(--gray); text-align: center; font-size: 24px; line-height: 34px; margin-right: 28px; }
.count strong { display: block; color: #fff; font-size: 45px; line-height: 56px; font-weight: 700; }
.chevron { width: 18px; height: 30px; color: #5a5a5e; }

.alert { display: flex; flex: none; align-items: center; gap: 32px; height: 144px; margin: 60px 67px 0; padding: 0 38px; border-radius: 26px; background: #1a0507; color: var(--red); }
.alert h3 { color: #fff; font-size: 31px; line-height: 44px; font-weight: 600; }
.alert p { color: #8c7f80; font-size: 25px; line-height: 42px; white-space: nowrap; }
.group.after-alert { padding-top: 91px; }

.scrollbar { position: absolute; right: 6px; width: 7px; border-radius: 4px; background: #7d7d7d; }
.scrollbar.long { top: 303px; height: 1280px; }
.scrollbar.short { top: 258px; height: 959px; }

/* Violation detail */
.hero { display: flex; flex: none; flex-direction: column; align-items: center; padding-top: 21px; text-align: center; }
.hero-icon { display: grid; place-items: center; width: 168px; height: 168px; border-radius: 50%; background: #261608; color: var(--orange); }
.hero h2 { margin-top: 44px; font-size: 44px; line-height: 54px; font-weight: 700; }
.hero > p { margin-top: 14px; color: #7d7d81; font-size: 30px; line-height: 42px; }
.facts { display: flex; height: 186px; width: 284px; margin-top: 41px; padding: 37px 0 31px; border-radius: 26px; background: var(--surface); color: var(--gray); font-size: 25px; line-height: 34px; }
.facts > div { display: flex; flex: 1; flex-direction: column; align-items: center; }
.facts > div + div { border-left: 1px solid #2a2a2c; padding-top: 7px; }
.facts strong { color: #fff; font-size: 62px; line-height: 74px; height: 84px; }
.facts svg { margin-bottom: 10px; color: var(--orange); }
.group.when { padding-top: 75px; }
.icon-row { justify-content: flex-start; gap: 38px; white-space: nowrap; }
.icon-row > svg { color: var(--blue); margin-left: 2px; }
.icon-row .value { margin-left: auto; }
.icon-row + .icon-row { border: 0; }
.card > .icon-row + .icon-row::before { content: ""; position: absolute; left: 86px; right: 0; top: 0; height: 2px; background: var(--line); }
.icon-row.until { gap: 27px; }
.remaining { min-height: 204px; }
.remaining p { margin-top: 5px; color: var(--gray); }
.fade { position: absolute; left: 0; right: 0; bottom: 0; height: 300px; background: linear-gradient(#00000000, #000000e6 72%); }

/* Settings */
.group.first { padding-top: 36px; }
.join { min-height: 162px; gap: 22px; margin-left: 37px; }
.join h4 { font-weight: 600; }
.join p { color: var(--gray); font-size: 25px; line-height: 42px; }
.group.about { padding-top: 66px; }
a.source.row { margin-left: 26px; gap: 29px; color: #2a91f5; }
a.source.row svg { color: #2a91f5; }
a.source svg:last-child { margin-left: auto; }
.row + .source.row { border: 0; }
.row + .source.row::before { content: ""; position: absolute; left: 8px; right: 0; top: 0; height: 2px; background: var(--line); }
.disclaimer { margin-top: 211px; text-align: center; color: #7d7d81; font-size: 25px; line-height: 34px; }

/* Leaderboard intro */
.intro { display: grid; gap: 81px; margin: 153px 34px 0 75px; }
.intro li { display: grid; grid-template-columns: 121px 1fr; gap: 24px; }
.intro span { display: grid; place-items: center; height: 102px; }
.intro h2 { font-weight: 600; }
.intro p { margin-top: 5px; color: var(--gray); font-size: 30px; line-height: 42px; }
.c-blue { color: var(--blue); }
.c-green { color: var(--green); }
.c-orange { color: var(--orange); }
.primary.inset { margin: 276px 67px 0; }
.home { position: absolute; left: 0; right: 0; bottom: 6px; width: 292px; height: 22px; margin: auto; border-radius: 11px; background: #fff; }

/* Share score */
.behind { flex: none; height: 481px; overflow: hidden; opacity: 0.5; }
.behind .intro { margin-top: -23px; }
.share { position: relative; }
.share .group { padding-top: 41px; }
.row.username { justify-content: flex-start; }
.row.username input { width: auto; field-sizing: content; }
.caret { width: 4px; height: 46px; background: var(--blue); }
.keyboard { flex: 1; margin-top: 90px; padding: 50px 17px 0; border-radius: 60px 60px 0 0; border: solid #38383a; border-width: 2px 0 0; background: #1b1b1b; }
.keys { display: grid; grid-template-columns: repeat(11, 1fr); gap: 13px; margin-bottom: 23px; }
.keys button { display: grid; place-items: center; height: 90px; padding-bottom: 2px; border-radius: 17px; background: #404040; font-size: 49px; line-height: 60px; }
.keys .wide { width: 91px; }
.keys .left { grid-column: 1 / 3; }
.keys .right { grid-column: 10 / 12; justify-self: end; }
.keys.bottom { grid-template-columns: 87px 87px 1fr 187px; }
.keys .num { font-size: 36px; }
.keys .space { place-items: end; padding: 0 10px 4px; font-size: 22px; line-height: 30px; color: #808080; }
.key-foot { display: flex; justify-content: space-between; align-items: center; padding: 27px 52px 0 44px; }

/* Ranking */
.ranks { margin: 17px 33px 0; font-weight: 500; }
.ranks li { display: flex; align-items: center; gap: 34px; height: 156px; padding: 0 34px; }
.ranks .dot { width: 68px; height: 68px; font-size: 30px; }
.ranks li > div { display: flex; align-items: center; flex: 1; height: 156px; }
.ranks li + li > div { border-top: 2px solid var(--line); }
.ranks strong { margin-left: auto; font-size: 48px; font-weight: 700; color: var(--yellow); }
.ranks strong.bad { color: var(--red); }
.ranks em { margin-left: 18px; padding: 0 16px; border-radius: 21px; background: var(--blue); font-size: 25px; line-height: 41px; font-style: normal; font-weight: 600; }
```
